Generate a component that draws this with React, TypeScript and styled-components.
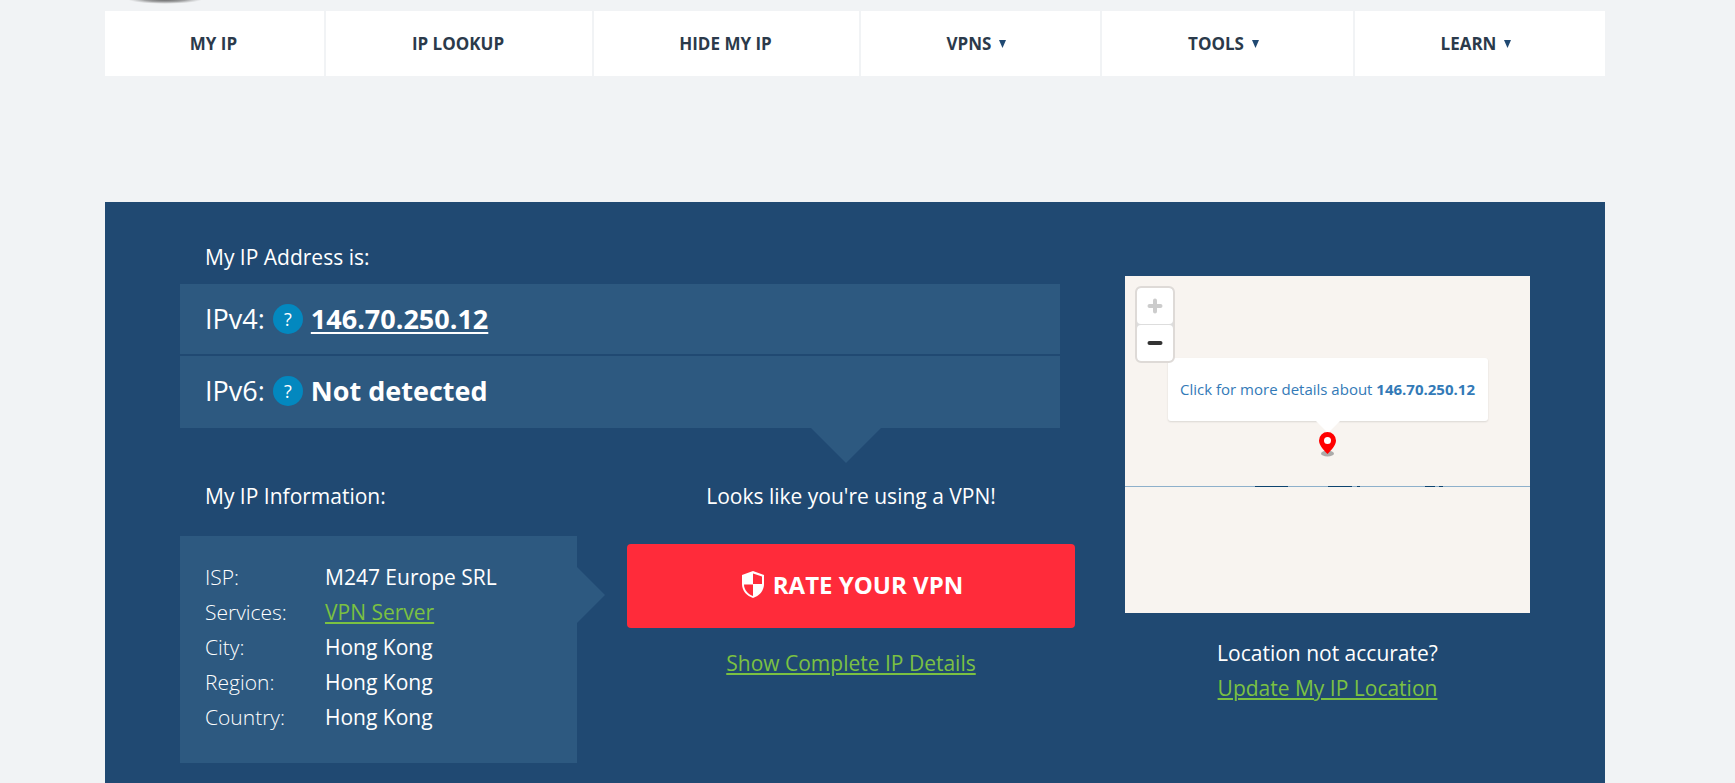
import React from "react";
import styled, { createGlobalStyle } from "styled-components";

const GlobalStyle = createGlobalStyle`
  *, *::before, *::after { box-sizing: border-box; }
  body {
    margin: 0;
    background: #f1f3f5;
    color: #fff;
    font-family: "Open Sans", "Noto Sans", sans-serif;
    font-size: 21px;
    line-height: 35px;
  }
  h2, p { margin: 0; font-size: inherit; font-weight: 400; }
`;

const Page = styled.div`
  padding: 0 25px 0 0;
`;

const Container = styled.div`
  max-width: 1500px;
  margin: 0 auto;
`;

const Header = styled.header`
  height: 11px;
  overflow: hidden;
  padding-left: 20px;
  svg { display: block; }
`;

const Nav = styled.nav`
  display: grid;
  grid-template-columns: 219fr 266fr 265fr 239fr 251fr 250fr;
  gap: 2px;
`;

const NavLink = styled.a<{ $menu?: boolean }>`
  display: flex;
  align-items: center;
  justify-content: center;
  gap: 8px;
  height: 65px;
  padding-right: ${(p) => (p.$menu ? 8 : 2)}px;
  background: #fff;
  color: #2b3a4b;
  font-size: 17px;
  font-weight: 700;
  text-decoration: none;
`;

const Panel = styled.main`
  display: grid;
  grid-template-columns: minmax(0, 895fr) minmax(0, 405fr);
  gap: 50px;
  margin-top: 126px;
  padding: 38px 75px 20px;
  background: #204972;
`;

const Heading = styled.h2`
  padding-left: 25px;
`;

const AddressList = styled.div`
  position: relative;
  display: grid;
  gap: 2px;
  margin: 9px 15px 51px 0;
  &::after {
    content: "";
    position: absolute;
    top: 100%;
    right: 179px;
    border: 35px solid transparent;
    border-top-color: #2d5980;
    border-bottom: 0;
  }
`;

const AddressRow = styled.div`
  display: flex;
  align-items: center;
  gap: 8px;
  padding: 17px 25px 18px;
  background: #2d5980;
  font-size: 27px;
  &:last-child { padding-bottom: 20px; }
  a { color: inherit; text-underline-offset: 3px; text-decoration-thickness: 2px; }
`;

const HelpButton = styled.button`
  width: 30px;
  height: 30px;
  padding: 0;
  border: 0;
  border-radius: 50%;
  background: #0388bf;
  color: #fff;
  font: 400 18px/30px "Open Sans", sans-serif;
`;

const Columns = styled.div`
  display: grid;
  grid-template-columns: minmax(0, 397fr) minmax(0, 448fr);
  gap: 50px;
`;

const InfoBox = styled.div`
  position: relative;
  margin-top: 22px;
  padding: 24px 25px 28px;
  background: #2d5980;
  &::after {
    content: "";
    position: absolute;
    top: 31px;
    left: 100%;
    border: 28px solid transparent;
    border-left-color: #2d5980;
    border-right: 0;
  }
`;

const InfoTable = styled.table`
  border-collapse: collapse;
  th { width: 120px; padding: 0; text-align: left; font-weight: 300; }
  td { padding: 0; }
`;

const GreenLink = styled.a`
  color: #7bc142;
  text-decoration-thickness: 2px;
  text-underline-offset: 2px;
`;

const Verdict = styled.section`
  text-align: center;
`;

const RateButton = styled.button`
  display: flex;
  align-items: center;
  justify-content: center;
  gap: 9px;
  width: 100%;
  height: 84px;
  margin: 30px 0 18px;
  padding: 0 0 4px 3px;
  border: 0;
  border-radius: 4px;
  background: #ff2b3a;
  color: #fff;
  font: 700 24px/35px "Open Sans", sans-serif;
`;

const Location = styled.section`
  padding-top: 36px;
  text-align: center;
`;

const MapView = styled.div`
  position: relative;
  height: 337px;
  margin-bottom: 23px;
  overflow: hidden;
  background: #f8f4f0;
`;

const ZoomControl = styled.div`
  position: absolute;
  z-index: 2;
  top: 10px;
  left: 10px;
  display: grid;
  gap: 1px;
  border: 2px solid #dedad7;
  border-radius: 6px;
  background: #ddd;
  overflow: hidden;
`;

const ZoomButton = styled.button`
  display: flex;
  align-items: center;
  justify-content: center;
  width: 36px;
  height: 36px;
  padding: 0;
  border: 0;
  border-radius: 4px;
  background: #fff;
`;

const Popup = styled.a`
  position: absolute;
  top: 82px;
  left: 50%;
  width: 320px;
  height: 63px;
  margin-left: -160px;
  border-radius: 3px;
  background: #fff;
  box-shadow: 0 1px 2px rgba(0, 0, 0, 0.12);
  color: #337ab7;
  font-size: 15px;
  line-height: 63px;
  text-decoration: none;
  white-space: nowrap;
  &::after {
    content: "";
    position: absolute;
    top: 100%;
    left: 50%;
    margin-left: -12px;
    border: 12px solid transparent;
    border-top-color: #fff;
    border-bottom: 0;
  }
`;

const Marker = styled.svg`
  position: absolute;
  top: 156px;
  left: 50%;
  margin-left: -10px;
`;

const Coast = styled.svg`
  position: absolute;
  top: 210px;
  left: 0;
  width: 100%;
`;

const menu = [
  { label: "MY IP" },
  { label: "IP LOOKUP" },
  { label: "HIDE MY IP" },
  { label: "VPNS", menu: true },
  { label: "TOOLS", menu: true },
  { label: "LEARN", menu: true },
];

const details = [
  { name: "ISP:", value: "M247 Europe SRL" },
  { name: "Services:", value: "VPN Server", link: true },
  { name: "City:", value: "Hong Kong" },
  { name: "Region:", value: "Hong Kong" },
  { name: "Country:", value: "Hong Kong" },
];

export default function App() {
  return (
    <Page>
      <GlobalStyle />
      <Container>
        <Header>
          <svg width="80" height="6" aria-hidden="true">
            <defs>
              <radialGradient id="shade">
                <stop offset="0" stopColor="#333" stopOpacity="0.85" />
                <stop offset="0.6" stopColor="#555" stopOpacity="0.5" />
                <stop offset="1" stopColor="#888" stopOpacity="0" />
              </radialGradient>
            </defs>
            <ellipse cx="40" cy="-1" rx="38" ry="5" fill="url(#shade)" />
          </svg>
        </Header>
        <Nav>
          {menu.map((item) => (
            <NavLink key={item.label} href="#" $menu={item.menu}>
              {item.label}
              {item.menu && (
                <svg width="7" height="8" aria-hidden="true">
                  <path d="M0 0h7L3.5 8z" fill="#204972" />
                </svg>
              )}
            </NavLink>
          ))}
        </Nav>
        <Panel>
          <div>
            <Heading>My IP Address is:</Heading>
            <AddressList>
              <AddressRow>
                <span>IPv4:</span>
                <HelpButton aria-label="About IPv4">?</HelpButton>
                <b><a href="#">146.70.250.12</a></b>
              </AddressRow>
              <AddressRow>
                <span>IPv6:</span>
                <HelpButton aria-label="About IPv6">?</HelpButton>
                <b>Not detected</b>
              </AddressRow>
            </AddressList>
            <Columns>
              <section>
                <Heading>My IP Information:</Heading>
                <InfoBox>
                  <InfoTable>
                    <tbody>
                      {details.map((d) => (
                        <tr key={d.name}>
                          <th scope="row">{d.name}</th>
                          <td>{d.link ? <GreenLink href="#">{d.value}</GreenLink> : d.value}</td>
                        </tr>
                      ))}
                    </tbody>
                  </InfoTable>
                </InfoBox>
              </section>
              <Verdict>
                <p>Looks like you're using a VPN!</p>
                <RateButton>
                  <svg width="22" height="27" viewBox="0 0 22 27" aria-hidden="true">
                    <path d="M11 0L22 4v9c0 7-5 12-11 14C5 25 0 20 0 13V4z" fill="#fff" />
                    <path d="M11 2.5l9 3V13h-9zM2 13.5h9V25C6 23 2 19 2 13.5z" fill="#ff2b3a" />
                  </svg>
                  RATE YOUR VPN
                </RateButton>
                <GreenLink href="#">Show Complete IP Details</GreenLink>
              </Verdict>
            </Columns>
          </div>
          <Location>
            <MapView>
              <Coast height="1" aria-hidden="true">
                <path d="M0 .5h3000" stroke="#8eb0cb" />
                <path d="M130 .5h33M203 .5h24M232 .5h3M300 .5h10M314 .5h4" stroke="#0d4470" />
              </Coast>
              <ZoomControl>
                <ZoomButton aria-label="Zoom in">
                  <svg width="16" height="16" aria-hidden="true">
                    <path d="M8 2.5v11M2.5 8h11" stroke="#ccc" strokeWidth="4" strokeLinecap="round" />
                  </svg>
                </ZoomButton>
                <ZoomButton aria-label="Zoom out">
                  <svg width="16" height="16" aria-hidden="true">
                    <path d="M2.5 8h11" stroke="#333" strokeWidth="4" strokeLinecap="round" />
                  </svg>
                </ZoomButton>
              </ZoomControl>
              <Popup href="#">
                Click for more details about <b>146.70.250.12</b>
              </Popup>
              <Marker width="20" height="26" viewBox="0 0 20 26" aria-hidden="true">
                <ellipse cx="9.5" cy="21.5" rx="6.5" ry="3" fill="#999" opacity="0.8" />
                <path d="M9.5 0a8.5 8.5 0 0 1 8.5 8.5C18 13 13.5 18 9.5 22 5.5 18 1 13 1 8.5A8.5 8.5 0 0 1 9.5 0z" fill="#f00" />
                <circle cx="9.5" cy="8.5" r="3.5" fill="#fff" />
              </Marker>
            </MapView>
            <p>Location not accurate?</p>
            <GreenLink href="#">Update My IP Location</GreenLink>
          </Location>
        </Panel>
      </Container>
    </Page>
  );
}
